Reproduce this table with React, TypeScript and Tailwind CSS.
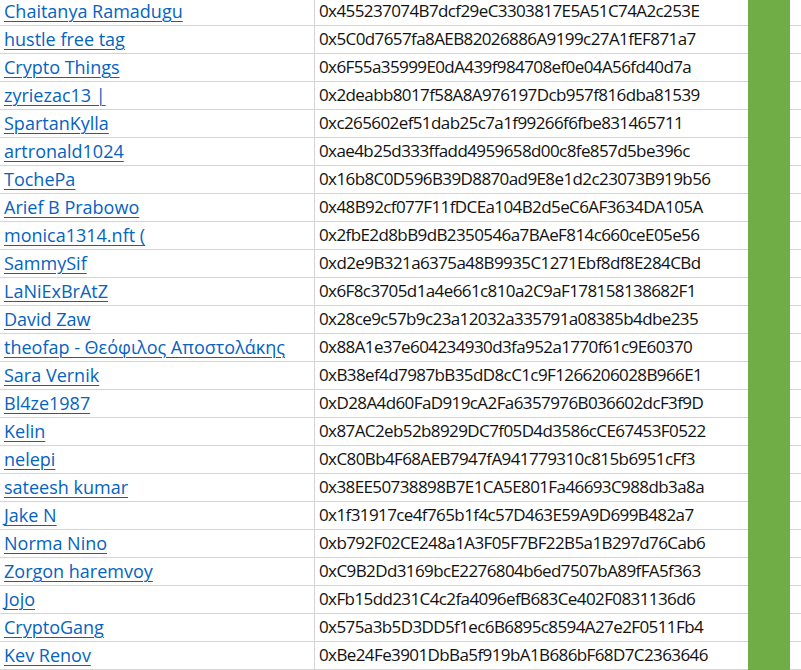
const rows: [string, string][] = [
  ["Chaitanya Ramadugu", "0x455237074B7dcf29eC3303817E5A51C74A2c253E"],
  ["hustle free tag", "0x5C0d7657fa8AEB82026886A9199c27A1fEF871a7"],
  ["Crypto Things", "0x6F55a35999E0dA439f984708ef0e04A56fd40d7a"],
  ["zyriezac13 |", "0x2deabb8017f58A8A976197Dcb957f816dba81539"],
  ["SpartanKylla", "0xc265602ef51dab25c7a1f99266f6fbe831465711"],
  ["artronald1024", "0xae4b25d333ffadd4959658d00c8fe857d5be396c"],
  ["TochePa", "0x16b8C0D596B39D8870ad9E8e1d2c23073B919b56"],
  ["Arief B Prabowo", "0x48B92cf077F11fDCEa104B2d5eC6AF3634DA105A"],
  ["monica1314.nft (", "0x2fbE2d8bB9dB2350546a7BAeF814c660ceE05e56"],
  ["SammySif", "0xd2e9B321a6375a48B9935C1271Ebf8df8E284CBd"],
  ["LaNiExBrAtZ", "0x6F8c3705d1a4e661c810a2C9aF178158138682F1"],
  ["David Zaw", "0x28ce9c57b9c23a12032a335791a08385b4dbe235"],
  ["theofap - Θεόφιλος Αποστολάκης", "0x88A1e37e604234930d3fa952a1770f61c9E60370"],
  ["Sara Vernik", "0xB38ef4d7987bB35dD8cC1c9F1266206028B966E1"],
  ["Bl4ze1987", "0xD28A4d60FaD919cA2Fa6357976B036602dcF3f9D"],
  ["Kelin", "0x87AC2eb52b8929DC7f05D4d3586cCE67453F0522"],
  ["nelepi", "0xC80Bb4F68AEB7947fA941779310c815b6951cFf3"],
  ["sateesh kumar", "0x38EE50738898B7E1CA5E801Fa46693C988db3a8a"],
  ["Jake N", "0x1f31917ce4f765b1f4c57D463E59A9D699B482a7"],
  ["Norma Nino", "0xb792F02CE248a1A3F05F7BF22B5a1B297d76Cab6"],
  ["Zorgon haremvoy", "0xC9B2Dd3169bcE2276804b6ed7507bA89fFA5f363"],
  ["Jojo", "0xFb15dd231C4c2fa4096efB683Ce402F0831136d6"],
  ["CryptoGang", "0x575a3b5D3DD5f1ec6B6895c8594A27e2F0511Fb4"],
  ["Kev Renov", "0xBe24Fe3901DbBa5f919bA1B686bF68D7C2363646"],
];

export default function App() {
  return (
    <div
      className="w-[801px] h-[670px] overflow-hidden bg-white"
      style={{ fontFamily: '"Open Sans", sans-serif' }}
    >
      <div className="-mt-[2px] flex flex-col">
        {rows.map(([name, addr]) => (
          <div key={addr} className="flex h-[28px] leading-[20px]">
            <div className="w-[315px] shrink-0 border-b border-r border-[#d4d4d4] flex items-end pl-1 pb-[4px] whitespace-nowrap overflow-hidden text-[18px]">
              <span className="text-[#0563c1] underline underline-offset-[3px] decoration-1">{name}</span>
            </div>
            <div className="w-[433px] shrink-0 border-b border-[#d4d4d4] flex items-end pl-1 pb-[4px] text-[#111] whitespace-nowrap overflow-hidden text-[17px] tracking-[-0.6px]">
              {addr}
            </div>
            <div className="w-[42px] shrink-0 bg-[#70ad47]" />
            <div className="flex-1 border-b border-[#d4d4d4]" />
          </div>
        ))}
      </div>
    </div>
  );
}
